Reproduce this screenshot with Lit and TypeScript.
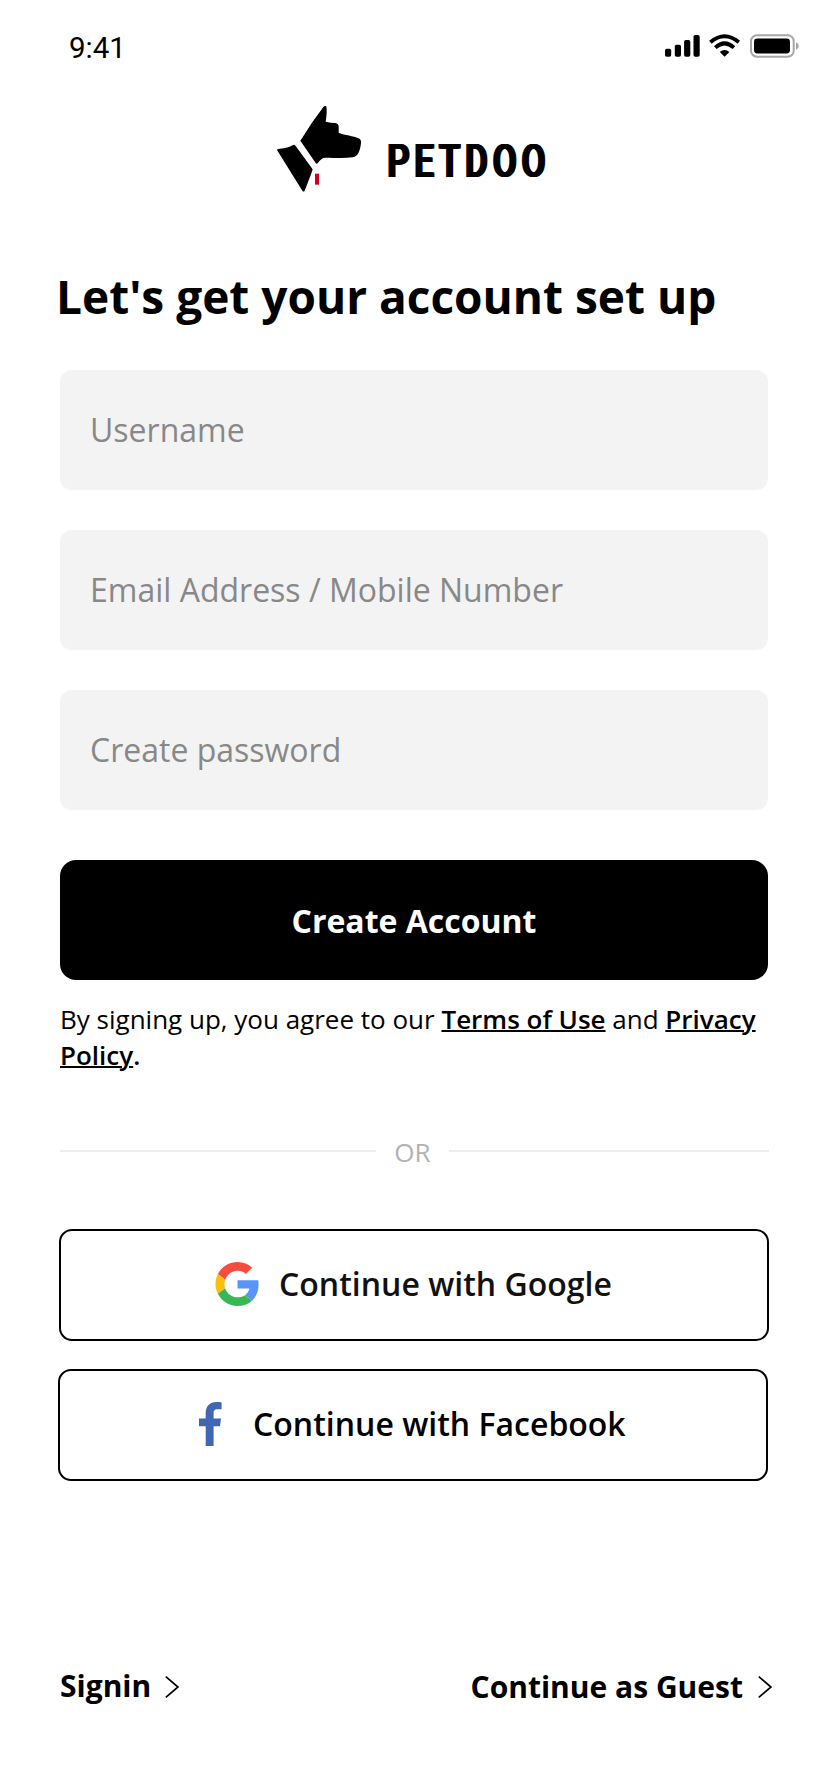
import { LitElement, html, css, svg } from "lit";
import { customElement } from "lit/decorators.js";

const statusIcons = svg`
  <svg class="status-icons" viewBox="0 0 140 26">
    <g>
      <rect x="2" y="15.7" width="6.2" height="8" rx="1.8"/>
      <rect x="11.8" y="11.7" width="6.2" height="12" rx="1.8"/>
      <rect x="21.1" y="7" width="6.2" height="16.7" rx="1.8"/>
      <rect x="30.5" y="2" width="6.2" height="21.7" rx="1.8"/>
    </g>
    <g fill="none" stroke="#000">
      <path d="M47.4 9.3Q61.6-2.7 75.8 9.3" stroke-width="3.9"/>
      <path d="M52.3 14.6Q61.6 6.2 70.9 14.6" stroke-width="3.9"/>
    </g>
    <path d="M56.8 18.9Q61.6 14.9 66.4 18.9L61.6 23.8Z"/>
    <rect x="88" y="2.2" width="42.7" height="21.6" rx="6" fill="none" stroke="#a6a6a6" stroke-width="2"/>
    <rect x="91" y="5.5" width="36" height="15" rx="3.4"/>
    <path d="M133 9.2Q135.8 10.5 135.8 13T133 16.8Z" fill="#a6a6a6"/>
  </svg>`;

const dogMark = svg`
  <svg class="dog" viewBox="30 24 270 270">
    <path d="M175 36Q179 31 184 34Q187 50 182 80Q198 84 211 84Q221 86 221 95L221 113C240 121 265 122 281 130Q289 134 288 143C286 165 280 184 263 187C235 191 205 188 182 188Q168 188 158 205Q155 208 152 204L106 137Q140 82 175 36Z"/>
    <path d="M36 165Q36 161 45 161Q68 160 84 150Q88 148 92 153L143 223Q138 240 119 287Q116 292 112 287Z"/>
    <rect x="150" y="236" width="12" height="33" fill="#d0021b"/>
  </svg>`;

const googleIcon = svg`
  <svg class="google" viewBox="0 0 48 48">
    <path fill="#f44c3e" d="M24 9.5c3.54 0 6.71 1.22 9.21 3.6l6.85-6.85C35.9 2.38 30.47 0 24 0 14.62 0 6.51 5.38 2.56 13.22l7.98 6.19C12.43 13.72 17.74 9.5 24 9.5z"/>
    <path fill="#5a94fa" d="M46.98 24.55c0-1.57-.15-3.09-.38-4.55H24v9.02h12.94c-.58 2.96-2.26 5.48-4.78 7.18l7.73 6c4.51-4.18 7.09-10.36 7.09-17.65z"/>
    <path fill="#fcbf10" d="M10.53 28.59c-.48-1.45-.76-2.99-.76-4.59s.27-3.14.76-4.59l-7.98-6.19C.92 16.46 0 20.12 0 24c0 3.88.92 7.54 2.56 10.78l7.97-6.19z"/>
    <path fill="#36b852" d="M24 48c6.48 0 11.93-2.13 15.89-5.81l-7.73-6c-2.15 1.45-4.92 2.3-8.16 2.3-6.26 0-11.57-4.22-13.47-9.91l-7.98 6.19C6.51 42.62 14.62 48 24 48z"/>
  </svg>`;

const facebookIcon = svg`
  <svg class="facebook" viewBox="0 0 23 44">
    <path fill="#4267b2" d="M6.7 44V24.3H0V16.5H6.7V11.5C6.7 4 10.8 0 17.2 0C19.5 0 21.6.2 22.6.4V7.3H18.5C15.1 7.3 14.6 9 14.6 11.4V16.5H22L21 24.3H14.6V44Z"/>
  </svg>`;

const chevron = svg`
  <svg class="chevron" viewBox="0 0 14 22">
    <path d="M.8.7L13 11L.8 21.3" fill="none" stroke="#000" stroke-width="1.7"/>
  </svg>`;

@customElement("app-root")
export class AppRoot extends LitElement {
  static styles = css`
    :host {
      display: block;
      height: 1792px;
      background: #fff;
      color: #000;
      font-family: "Open Sans", sans-serif;
    }
    * { box-sizing: border-box; }
    svg { display: block; flex: none; }
    button, input { font: inherit; }
    .screen {
      display: flex;
      flex-direction: column;
      height: 100%;
      padding: 0 60px;
    }
    .status {
      display: flex;
      justify-content: space-between;
      height: 96px;
      margin: 0 -35px 0 9px;
      padding-top: 33px;
    }
    .time {
      font: 400 29.5px/30px Roboto, sans-serif;
      letter-spacing: 0;
    }
    .status-icons { width: 140px; height: 26px; }
    .brand {
      display: flex;
      height: 170px;
      padding: 7px 0 0 215px;
    }
    .dog { width: 90px; height: 90px; }
    .wordmark {
      margin: 31px 0 0 21px;
      font: 500 46px/54px Roboto, sans-serif;
      font-kerning: none;
      letter-spacing: 6.8px;
      white-space: nowrap;
      height: 54px;
      transform: scaleX(0.75);
      transform-origin: left;
      text-shadow: 1.2px 0 #000, 2.4px 0 #000, 3.6px 0 #000;
    }
    h1 {
      margin: 0 0 44px -4px;
      font-size: 46px;
      line-height: 60px;
      font-weight: 700;
      white-space: nowrap;
    }
    .fields { display: grid; gap: 40px; }
    .field {
      width: 100%;
      height: 120px;
      padding: 0 30px 2px;
      border: 0;
      border-radius: 12px;
      background: #f3f3f3;
      font-size: 32px;
    }
    .field::placeholder { color: #888; opacity: 1; }
    .create {
      height: 120px;
      margin-top: 50px;
      border: 0;
      border-radius: 16px;
      background: #000;
      color: #fff;
      font-size: 32px;
      font-weight: 700;
      flex: none;
    }
    .terms {
      margin: 21px 0 0;
      font-size: 26px;
      line-height: 36px;
    }
    .terms a, .dot { font-weight: 600; }
    .terms a {
      text-decoration: underline;
      text-decoration-thickness: 2px;
      text-underline-offset: 1px;
    }
    .or {
      display: flex;
      align-items: center;
      height: 40px;
      margin: 58px -1px 0 0;
      color: #b2b2b2;
      font-size: 26px;
      line-height: 36px;
    }
    .or span { padding: 1px 18.5px 0 18px; }
    .or .rule:last-child { flex: none; width: 320px; }
    .rule { flex: 1; height: 2px; background: #ededed; }
    .social {
      display: flex;
      align-items: center;
      width: 710px;
      height: 112px;
      border: 2px solid #000;
      border-radius: 13px;
      background: none;
      font-size: 32px;
      font-weight: 600;
      line-height: 44px;
      flex: none;
    }
    .social span { margin-bottom: 3px; white-space: nowrap; }
    .with-google {
      margin: 58px 0 0 -1px;
      padding: 0 0 0 154px;
      gap: 19px;
      color: #111;
      border-color: #000;
    }
    .with-facebook {
      margin: 28px 0 0 -2px;
      padding: 0 0 0 139px;
      gap: 31px;
      color: #000;
    }
    .google { width: 45px; height: 44px; margin-bottom: 2px; }
    .facebook { width: 23px; height: 44px; margin-bottom: 2px; }
    .links {
      display: flex;
      justify-content: space-between;
      margin: 184px -4px 0 0;
      font-size: 30px;
      font-weight: 700;
      line-height: 40px;
    }
    .link { display: flex; gap: 14px; }
    .link span { margin-top: 1px; }
    .link.guest { gap: 15px; }
    .guest span { margin-top: 2px; }
    .chevron { width: 14px; height: 22px; margin-top: 11px; }
  `;

  render() {
    return html`
      <main class="screen">
        <div class="status"><span class="time">9:41</span>${statusIcons}</div>
        <div class="brand">${dogMark}<span class="wordmark">PETDOO</span></div>
        <h1>Let's get your account set up</h1>
        <div class="fields">
          ${["Username", "Email Address / Mobile Number", "Create password"].map(
            (label) => html`<input class="field" placeholder=${label} aria-label=${label} />`
          )}
        </div>
        <button class="create">Create Account</button>
        <p class="terms">By signing up, you agree to our <a>Terms of Use</a> and <a>Privacy Policy</a><span class="dot">.</span></p>
        <div class="or"><i class="rule"></i><span>OR</span><i class="rule"></i></div>
        <button class="social with-google">${googleIcon}<span>Continue with Google</span></button>
        <button class="social with-facebook">${facebookIcon}<span>Continue with Facebook</span></button>
        <nav class="links">
          <a class="link"><span>Signin</span>${chevron}</a>
          <a class="link guest"><span class="guest-label">Continue as Guest</span>${chevron}</a>
        </nav>
      </main>
    `;
  }
}
